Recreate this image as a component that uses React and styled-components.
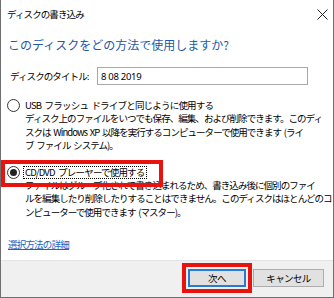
import React from "react";
import styled, { createGlobalStyle } from "styled-components";

const Global = createGlobalStyle`
  html, body { margin: 0; padding: 0; background: #ffffff; }
  * { box-sizing: border-box; }
`;

const FONT = `"Noto Sans CJK JP", "Noto Sans", sans-serif`;

const Window = styled.div`
  width: 334px;
  height: 298px;
  display: flex;
  flex-direction: column;
  background: #ffffff;
  border-left: 1px solid #6f6f6f;
  border-right: 1px solid #6f6f6f;
  border-bottom: 1px solid #6f6f6f;
  font-family: ${FONT};
  color: #000;
  overflow: hidden;
`;

const TitleBar = styled.div`
  height: 28px;
  flex: none;
  display: flex;
  align-items: center;
  justify-content: space-between;
  padding: 0 5px 0 6px;
`;

const TitleText = styled.span`
  font-size: 9.5px;
  letter-spacing: -0.9px;
`;

const CloseBtn = styled.span`
  display: flex;
  width: 11px;
  height: 11px;
`;

const Content = styled.div`
  flex: 1;
  padding: 0 6px;
  display: flex;
  flex-direction: column;
`;

const Heading = styled.div`
  margin-top: 8px;
  padding-left: 1px;
  font-size: 12px;
  line-height: 18px;
  color: #1f58a6;
  white-space: nowrap;
`;

const FieldRow = styled.div`
  margin-top: 13px;
  display: flex;
  align-items: center;
  height: 18px;
`;

const FieldLabel = styled.span`
  width: 90px;
  padding-left: 3px;
  font-size: 9.5px;
  letter-spacing: -0.9px;
  white-space: nowrap;
`;

const TextBox = styled.div`
  width: 211px;
  height: 18px;
  border: 1px solid #a9a9a9;
  display: flex;
  align-items: center;
  padding-left: 3px;
  font-family: "Noto Sans", sans-serif;
  font-size: 9.5px;
  letter-spacing: -0.3px;
`;

const Option = styled.div`
  position: relative;
  margin-top: ${(p) => p.$gap}px;
  display: flex;
  flex-direction: column;
`;

const OptionRow = styled.div`
  height: 13px;
  display: flex;
  align-items: center;
  gap: 3px;
`;

const Radio = styled.span`
  width: 13px;
  height: 13px;
  flex: none;
  border-radius: 50%;
  border: 1px solid #333;
  background: #fff;
  display: flex;
  align-items: center;
  justify-content: center;
  &::after {
    content: "";
    width: 7px;
    height: 7px;
    border-radius: 50%;
    background: ${(p) => (p.$checked ? "#222" : "transparent")};
  }
`;

const OptionLabel = styled.span`
  font-size: 9.5px;
  letter-spacing: -0.8px;
  word-spacing: 2px;
  line-height: 11px;
  white-space: nowrap;
  padding: 0 1px;
  border: 1px dotted ${(p) => (p.$focused ? "#000" : "transparent")};
`;

const Desc = styled.div`
  margin-left: 18px;
  font-size: 9.5px;
  letter-spacing: -0.95px;
  word-spacing: 1.5px;
  line-height: 13.5px;
  white-space: nowrap;
`;

const Highlight = styled.div`
  position: absolute;
  left: -6px;
  top: -6px;
  width: 162px;
  height: 27px;
  border: 4px solid #e8120f;
  pointer-events: none;
`;

const Link = styled.a`
  margin-top: 18px;
  padding-left: 1px;
  font-size: 9.5px;
  letter-spacing: -0.8px;
  line-height: 14px;
  color: #1a64c0;
  text-decoration: underline;
  align-self: flex-start;
`;

const Footer = styled.div`
  height: 37px;
  flex: none;
  background: #f0f0f0;
  border-top: 1px solid #e3e3e3;
  display: flex;
  justify-content: flex-end;
  align-items: flex-start;
  padding: 2px 9px 0 0;
  gap: 1px;
`;

const RedFrame = styled.div`
  border: 4px solid #e8120f;
  padding: 2px;
  display: flex;
`;

const Button = styled.button`
  width: ${(p) => p.$w}px;
  height: 18px;
  margin-top: ${(p) => (p.$default ? 0 : 6)}px;
  background: #e1e1e1;
  border: ${(p) => (p.$default ? "2px solid #2a7ad4" : "1px solid #adadad")};
  font-family: ${FONT};
  font-size: 9.5px;
  letter-spacing: -0.6px;
  color: #000;
  padding: 0;
  display: flex;
  align-items: center;
  justify-content: center;
`;

export default function App() {
  return (
    <>
      <Global />
      <Window>
        <TitleBar>
          <TitleText>ディスクの書き込み</TitleText>
          <CloseBtn>
            <svg width="11" height="11" viewBox="0 0 11 11">
              <path d="M0.5 0.5 L10.5 10.5 M10.5 0.5 L0.5 10.5" stroke="#222" strokeWidth="1" />
            </svg>
          </CloseBtn>
        </TitleBar>
        <Content>
          <Heading>このディスクをどの方法で使用しますか?</Heading>
          <FieldRow>
            <FieldLabel>ディスクのタイトル:</FieldLabel>
            <TextBox>8 08 2019</TextBox>
          </FieldRow>
          <Option $gap={14}>
            <OptionRow>
              <Radio />
              <OptionLabel>USB フラッシュ ドライブと同じように使用する</OptionLabel>
            </OptionRow>
            <Desc>
              ディスク上のファイルをいつでも保存、編集、および削除できます。このディ
              <br />
              スクは Windows XP 以降を実行するコンピューターで使用できます (ライ
              <br />
              ブ ファイル システム)。
            </Desc>
          </Option>
          <Option $gap={13}>
            <OptionRow>
              <Radio $checked />
              <OptionLabel $focused>CD/DVD プレーヤーで使用する</OptionLabel>
            </OptionRow>
            <Desc>
              ファイルはグループ化されて書き込まれるため、書き込み後に個別のファイ
              <br />
              ルを編集したり削除したりすることはできません。このディスクはほとんどのコ
              <br />
              ンピューターで使用できます (マスター)。
            </Desc>
            <Highlight />
          </Option>
          <Link>選択方法の詳細</Link>
        </Content>
        <Footer>
          <RedFrame>
            <Button $w={58} $default>次へ</Button>
          </RedFrame>
          <Button $w={71}>キャンセル</Button>
        </Footer>
      </Window>
    </>
  );
}
